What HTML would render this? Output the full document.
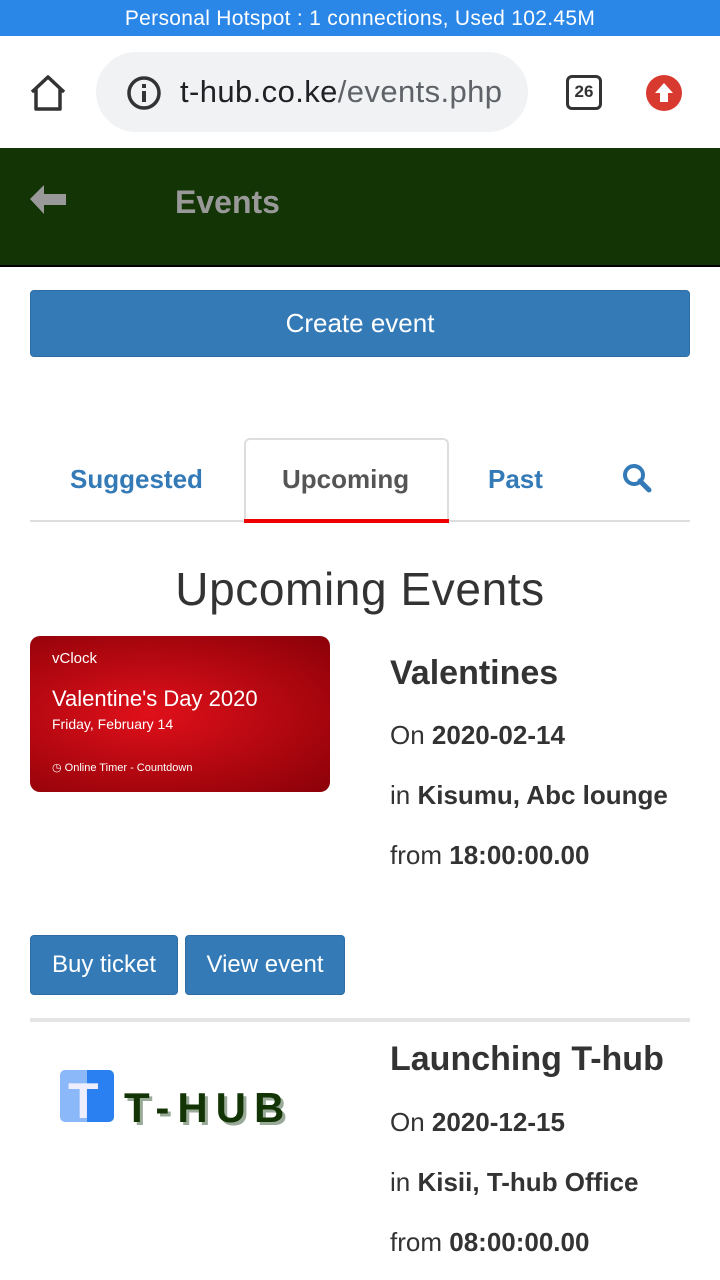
<!DOCTYPE html>
<html><head><style>
*{margin:0;padding:0;box-sizing:border-box}
body{width:720px;height:1280px;overflow:hidden;background:#fff;font-family:"Liberation Sans",sans-serif;color:#333;position:relative}
.a{position:absolute}
.btn{position:absolute;background:#337ab7;border:1px solid #2e6da4;border-radius:4px;color:#fff;text-align:center;font-size:24px}
.t{font-size:26px;color:#333}
</style></head><body>
<div class="a" style="left:0;top:0;width:720px;height:36px;background:#2a87e8;color:#fff;font-size:21px;letter-spacing:0.3px;text-align:center;line-height:38px">Personal Hotspot : 1 connections, Used 102.45M</div>
<div class="a" style="left:0;top:36px;width:720px;height:112px;background:#fff"></div>
<svg class="a" style="left:28px;top:74px" width="40" height="38" viewBox="0 0 40 38"><path d="M4 18 L20 3 L36 18 M8 15 V35 H32 V15" fill="none" stroke="#333" stroke-width="3.5" stroke-linejoin="round"/></svg>
<div class="a" style="left:96px;top:52px;width:432px;height:80px;border-radius:40px;background:#f1f2f4"></div>
<svg class="a" style="left:125px;top:74px" width="38" height="38"><circle cx="19" cy="19" r="15" fill="none" stroke="#333" stroke-width="3.5"/><rect x="17" y="17" width="4" height="11" fill="#333"/><rect x="17" y="10" width="4" height="4" fill="#333"/></svg>
<div class="a" style="left:180px;top:74px;font-size:31px;letter-spacing:0.4px;color:#202124">t-hub.co.ke<span style="color:#5f6368">/events.php</span></div>
<div class="a" style="left:566px;top:75px;width:36px;height:35px;border:3.5px solid #333;border-radius:6px;font-size:17px;font-weight:bold;text-align:center;line-height:28px;color:#333">26</div>
<div class="a" style="left:646px;top:75px;width:36px;height:36px;border-radius:50%;background:#d93a2f"></div>
<svg class="a" style="left:646px;top:75px" width="36" height="36"><path d="M18 8 L27 18 H22 V27 H14 V18 H9 Z" fill="#fff"/></svg>
<div class="a" style="left:0;top:148px;width:720px;height:119px;background:#133505;border-bottom:2px solid #000"></div>
<svg class="a" style="left:30px;top:185px" width="38" height="30"><path d="M0 14 L14 0 V9 H36 V20 H14 V29 Z" fill="#999"/></svg>
<div class="a" style="left:175px;top:184px;font-size:32px;font-weight:bold;color:#999">Events</div>
<div class="btn" style="left:30px;top:290px;width:660px;height:67px;line-height:65px;font-size:26px">Create event</div>
<div class="a" style="left:30px;top:520px;width:660px;height:2px;background:#ddd"></div>
<div class="a" style="left:244px;top:438px;width:205px;height:85px;border:2px solid #ddd;border-bottom:none;border-radius:6px 6px 0 0;background:#fff"></div>
<div class="a" style="left:244px;top:519px;width:205px;height:4px;background:#e00"></div>
<div class="a" style="left:70px;top:464px;font-size:26px;font-weight:bold;color:#337ab7">Suggested</div>
<div class="a" style="left:282px;top:464px;font-size:26px;font-weight:bold;color:#555">Upcoming</div>
<div class="a" style="left:488px;top:464px;font-size:26px;font-weight:bold;color:#337ab7">Past</div>
<svg class="a" style="left:622px;top:463px" width="30" height="30"><circle cx="12" cy="12" r="9" fill="none" stroke="#337ab7" stroke-width="4"/><path d="M18 18 L27 27" stroke="#337ab7" stroke-width="5" stroke-linecap="round"/></svg>
<div class="a" style="left:0;top:562px;width:720px;text-align:center;font-size:46px;letter-spacing:0.6px;color:#333">Upcoming Events</div>
<div class="a" style="left:30px;top:636px;width:300px;height:156px;border-radius:10px;background:radial-gradient(ellipse at 40% 50%,#e0101a,#8a0008);overflow:hidden;color:#fff">
<div class="a" style="left:22px;top:14px;font-size:15px">vClock</div>
<div class="a" style="left:22px;top:50px;font-size:22px">Valentine's Day 2020</div>
<div class="a" style="left:22px;top:80px;font-size:14px">Friday, February 14</div>
<div class="a" style="left:22px;top:125px;font-size:11px">◷ Online Timer - Countdown</div>
</div>
<div class="a" style="left:390px;top:654px;font-size:34px;font-weight:bold;color:#333">Valentines</div>
<div class="a t" style="left:390px;top:720px">On <b>2020-02-14</b></div>
<div class="a t" style="left:390px;top:780px">in <b>Kisumu, Abc lounge</b></div>
<div class="a t" style="left:390px;top:840px">from <b>18:00:00.00</b></div>
<div class="btn" style="left:30px;top:935px;width:148px;height:60px;line-height:58px">Buy ticket</div>
<div class="btn" style="left:185px;top:935px;width:160px;height:60px;line-height:58px">View event</div>
<div class="a" style="left:30px;top:1018px;width:660px;height:4px;background:#e5e5e5"></div>
<div class="a" style="left:60px;top:1070px;width:54px;height:52px;border-radius:5px;background:linear-gradient(90deg,#8ab8f8 50%,#2a80f0 50%)"></div>
<div class="a" style="left:68px;top:1072px;font-size:50px;font-weight:bold;color:#eef">T</div>
<div class="a" style="left:124px;top:1084px;font-size:42px;font-weight:bold;color:#133505;letter-spacing:8px;text-shadow:3px 3px 0 #9a9">T-HUB</div>
<div class="a" style="left:390px;top:1040px;font-size:34px;font-weight:bold;color:#333">Launching T-hub</div>
<div class="a t" style="left:390px;top:1107px">On <b>2020-12-15</b></div>
<div class="a t" style="left:390px;top:1167px">in <b>Kisii, T-hub Office</b></div>
<div class="a t" style="left:390px;top:1227px">from <b>08:00:00.00</b></div>
</body></html>
